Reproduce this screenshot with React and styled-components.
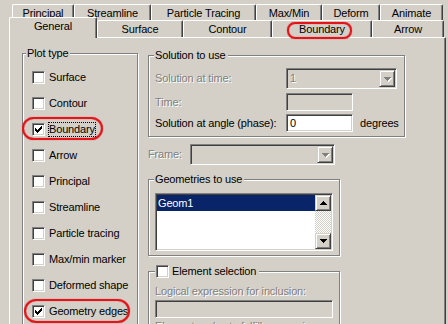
import React from 'react'
import styled, { createGlobalStyle, css } from 'styled-components'

const backTabs = [
  ['Principal', 62],
  ['Streamline', 77],
  ['Particle Tracing', 105],
  ['Max/Min', 66],
  ['Deform', 58],
  ['Animate', 63],
]

const frontTabs = [
  { label: 'General', width: 88, active: true },
  { label: 'Surface', width: 86 },
  { label: 'Contour', width: 89 },
  { label: 'Boundary', width: 100, ring: { left: 14, top: 1, width: 65, height: 17 } },
  { label: 'Arrow', width: 72 },
]

const plotTypes = [
  { label: 'Surface' },
  { label: 'Contour' },
  { label: 'Boundary', checked: true, focused: true, ring: { left: -10, top: 1, width: 81, height: 23 } },
  { label: 'Arrow' },
  { label: 'Principal' },
  { label: 'Streamline' },
  { label: 'Particle tracing' },
  { label: 'Max/min marker' },
  { label: 'Deformed shape' },
  { label: 'Geometry edges', checked: true, ring: { left: -8, top: 1, width: 106, height: 24 } },
]

function CheckMark() {
  return (
    <svg width="7" height="7" viewBox="0 0 7 7">
      <path d="M0 2h1v3H0zM1 3h1v3H1zM2 4h1v3H2zM3 3h1v3H3zM4 2h1v3H4zM5 1h1v3H5zM6 0h1v3H6z" fill="#000" />
    </svg>
  )
}

function Arrow({ up, disabled }) {
  const d = up
    ? 'M3 0h1v1H3zM2 1h3v1H2zM1 2h5v1H1zM0 3h7v1H0z'
    : 'M0 0h7v1H0zM1 1h5v1H1zM2 2h3v1H2zM3 3h1v1H3z'
  return (
    <svg width="8" height="5" viewBox="0 0 8 5">
      {disabled && <path d={d} fill="#fff" transform="translate(1 1)" />}
      <path d={d} fill={disabled ? '#808080' : '#000'} />
    </svg>
  )
}

function Combo({ width, value }) {
  return (
    <ComboBox $w={width}>
      <ComboValue>{value}</ComboValue>
      <RaisedButton $h={17}>
        <Arrow disabled />
      </RaisedButton>
    </ComboBox>
  )
}

function App() {
  return (
    <Window>
      <GlobalStyle />
      <TabRow $left={12} $top={4} $h={16}>
        {backTabs.map(([label, w]) => (
          <Tab key={label} $w={w} $h={16}>{label}</Tab>
        ))}
      </TabRow>
      <TabRow $left={9} $h={17}>
        {frontTabs.map(t => (
          <Tab key={t.label} $w={t.width} $h={t.active ? 21 : 17} $active={t.active}>
            {t.label}
            {t.ring && <Ring {...ringProps(t.ring)} $radius={8} />}
          </Tab>
        ))}
      </TabRow>

      <Panel>
        <Group $w={116} $h={290} $pl={9}>
          <GroupTitle $ml={-6}>Plot type</GroupTitle>
          <CheckList>
            {plotTypes.map(p => (
              <CheckRow key={p.label}>
                <CheckBox>{p.checked && <CheckMark />}</CheckBox>
                <CheckLabel $focused={p.focused}>{p.label}</CheckLabel>
                {p.ring && <Ring {...ringProps(p.ring)} $radius={12} />}
              </CheckRow>
            ))}
          </CheckList>
        </Group>

        <Column>
          <Group $w={257} $pl={6} $pb={4}>
            <GroupTitle $ml={-1}>Solution to use</GroupTitle>
            <FieldRow $mt={6}>
              <FieldLabel $w={131} $muted>Solution at time:</FieldLabel>
              <Combo width={111} value="1" />
            </FieldRow>
            <FieldRow $mt={4}>
              <FieldLabel $w={131} $muted>Time:</FieldLabel>
              <TextField $w={67} />
            </FieldRow>
            <FieldRow $mt={3}>
              <FieldLabel $w={131}>Solution at angle (phase):</FieldLabel>
              <TextField $w={67} $enabled>0</TextField>
              <Unit>degrees</Unit>
            </FieldRow>
          </Group>

          <FieldRow $mt={7}>
            <FieldLabel $w={42} $muted>Frame:</FieldLabel>
            <Combo width={145} />
          </FieldRow>

          <Group $w={192} $pl={6} $pb={4} $mt={14}>
            <GroupTitle $ml={-1}>Geometries to use</GroupTitle>
            <ListBox>
              <ListItems>
                <ListItem $selected>Geom1</ListItem>
              </ListItems>
              <ScrollBar>
                <RaisedButton $h={16}><Arrow up /></RaisedButton>
                <ScrollTrack />
                <RaisedButton $h={16}><Arrow /></RaisedButton>
              </ScrollBar>
            </ListBox>
          </Group>

          <Group $w={192} $h={80} $pl={6} $mt={15}>
            <GroupTitle $ml={0} $pr={3}>
              <CheckBox />
              <TitleText>Element selection</TitleText>
            </GroupTitle>
            <FieldLabel $muted $mt={7}>Logical expression for inclusion:</FieldLabel>
            <TextField $w={178} $mt={2} />
            <FieldLabel $muted $mt={2}>Element nodes to fulfill expression:</FieldLabel>
          </Group>
        </Column>
      </Panel>
    </Window>
  )
}

function ringProps(r) {
  return { $l: r.left, $t: r.top, $rw: r.width, $rh: r.height }
}

export default App

const GlobalStyle = createGlobalStyle`
  html, body {
    margin: 0;
    padding: 0;
    background: #d4d0c8;
  }
`

const muted = css`
  color: #808080;
  text-shadow: 1px 1px 0 #fff;
`

const sunken = css`
  box-sizing: border-box;
  border: 1px solid;
  border-color: #808080 #fff #fff #808080;
  box-shadow: inset 1px 1px #404040, inset -1px -1px #d4d0c8;
`

const Window = styled.div`
  width: 448px;
  height: 324px;
  overflow: hidden;
  background: #d4d0c8;
  color: #000;
  font-family: "Liberation Sans", Arial, sans-serif;
  font-size: 11px;
  line-height: 13px;
  letter-spacing: -0.15px;
`

const TabRow = styled.div`
  display: flex;
  align-items: flex-end;
  margin-left: ${p => p.$left}px;
  margin-top: ${p => p.$top || 0}px;
  height: ${p => p.$h}px;
`

const Tab = styled.div`
  box-sizing: border-box;
  position: relative;
  z-index: ${p => (p.$active ? 2 : 1)};
  flex: none;
  width: ${p => p.$w}px;
  height: ${p => p.$h}px;
  margin-bottom: ${p => (p.$active ? -1 : 0)}px;
  padding-top: 2px;
  text-align: center;
  white-space: nowrap;
  background: #d4d0c8;
  border-top: 1px solid #fff;
  border-left: 1px solid #fff;
  border-right: 1px solid #404040;
  border-radius: 2px 2px 0 0;
  box-shadow: inset -1px 0 #808080;
`

const Ring = styled.span`
  position: absolute;
  left: ${p => p.$l}px;
  top: ${p => p.$t}px;
  width: ${p => p.$rw}px;
  height: ${p => p.$rh}px;
  box-sizing: border-box;
  border: 2px solid #e3151b;
  border-radius: ${p => p.$radius}px;
  box-shadow: 0 0 1px #e3151b, inset 0 0 1px #e3151b;
  pointer-events: none;
`

const Panel = styled.div`
  box-sizing: border-box;
  position: relative;
  display: flex;
  align-items: flex-start;
  gap: 10px;
  width: 437px;
  height: 300px;
  margin-left: 9px;
  padding: 15px 0 0 12px;
  border-top: 1px solid #fff;
  border-left: 1px solid #fff;
  border-right: 1px solid #404040;
  box-shadow: inset -1px 0 #808080;
`

const Group = styled.div`
  box-sizing: border-box;
  flex: none;
  width: ${p => p.$w}px;
  height: ${p => (p.$h ? `${p.$h}px` : 'auto')};
  margin-top: ${p => p.$mt || 0}px;
  padding: 0 0 ${p => p.$pb || 0}px ${p => p.$pl}px;
  border: 1px solid #808080;
  box-shadow: inset 1px 1px #fff, 1px 1px #fff;
`

const GroupTitle = styled.div`
  display: flex;
  align-items: center;
  width: fit-content;
  height: 13px;
  margin: -7px 0 0 ${p => p.$ml}px;
  padding: 0 ${p => p.$pr || 2}px 0 1px;
  background: #d4d0c8;
  white-space: nowrap;
`

const TitleText = styled.span`
  margin-left: 3px;
`

const CheckList = styled.div`
  padding-top: 4px;
`

const CheckRow = styled.div`
  position: relative;
  display: flex;
  align-items: center;
  height: 26px;
`

const CheckBox = styled.span`
  box-sizing: border-box;
  flex: none;
  display: inline-flex;
  align-items: center;
  justify-content: center;
  width: 13px;
  height: 13px;
  background: #fff;
  border: 1px solid;
  border-color: #808080 #fff #fff #808080;
  box-shadow: inset 1px 1px #404040, inset -1px -1px #d4d0c8;
`

const CheckLabel = styled.span`
  margin-left: 4px;
  white-space: nowrap;
  outline: ${p => (p.$focused ? '1px dotted #000' : 'none')};
`

const Column = styled.div`
  display: flex;
  flex-direction: column;
  align-items: flex-start;
  margin-top: 2px;
`

const FieldRow = styled.div`
  display: flex;
  align-items: center;
  margin-top: ${p => p.$mt || 0}px;
`

const FieldLabel = styled.div`
  flex: none;
  width: ${p => (p.$w ? `${p.$w}px` : 'auto')};
  margin-top: ${p => p.$mt || 0}px;
  white-space: nowrap;
  ${p => p.$muted && muted}
`

const ComboBox = styled.div`
  ${sunken};
  display: flex;
  width: ${p => p.$w}px;
  height: 21px;
  padding: 1px;
  background: #d4d0c8;
`

const ComboValue = styled.span`
  flex: 1;
  padding-left: 2px;
  line-height: 17px;
  ${muted}
`

const RaisedButton = styled.span`
  box-sizing: border-box;
  flex: none;
  display: flex;
  align-items: center;
  justify-content: center;
  width: 16px;
  height: ${p => p.$h}px;
  background: #d4d0c8;
  border: 1px solid;
  border-color: #d4d0c8 #404040 #404040 #d4d0c8;
  box-shadow: inset 1px 1px #fff, inset -1px -1px #808080;

  svg {
    margin: 1px 0 0 1px;
  }
`

const TextField = styled.div`
  ${sunken};
  width: ${p => p.$w}px;
  height: 18px;
  margin-top: ${p => p.$mt || 0}px;
  padding: 1px 3px;
  line-height: 14px;
  background: ${p => (p.$enabled ? '#fff' : '#d4d0c8')};
`

const Unit = styled.span`
  margin-left: 7px;
`

const ListBox = styled.div`
  ${sunken};
  display: flex;
  width: 178px;
  height: 58px;
  margin-top: 7px;
  padding: 1px;
  background: #fff;
`

const ListItems = styled.div`
  flex: 1;
`

const ListItem = styled.div`
  height: 16px;
  padding-left: 1px;
  line-height: 16px;
  background: ${p => (p.$selected ? '#0a246a' : 'transparent')};
  color: ${p => (p.$selected ? '#fff' : '#000')};
`

const ScrollBar = styled.div`
  display: flex;
  flex-direction: column;
  width: 16px;
`

const ScrollTrack = styled.div`
  flex: 1;
  background: repeating-conic-gradient(#fff 0 25%, #d4d0c8 0 50%) 0 0 / 2px 2px;
`
